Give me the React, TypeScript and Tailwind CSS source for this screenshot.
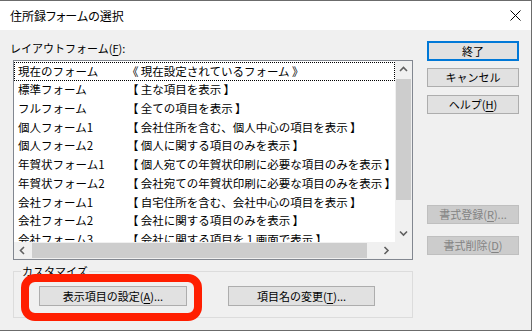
import React from 'react';

const rows: [string, string][] = [
  ['現在のフォーム', '《\u2009現在設定されているフォーム\u2009》'],
  ['標準フォーム', '【\u2009主な項目を表示\u2009】'],
  ['フルフォーム', '【\u2009全ての項目を表示\u2009】'],
  ['個人フォーム1', '【\u2009会社住所を含む、個人中心の項目を表示\u2009】'],
  ['個人フォーム2', '【\u2009個人に関する項目のみを表示\u2009】'],
  ['年賀状フォーム1', '【\u2009個人宛ての年賀状印刷に必要な項目のみを表示\u2009】'],
  ['年賀状フォーム2', '【\u2009会社宛ての年賀状印刷に必要な項目のみを表示\u2009】'],
  ['会社フォーム1', '【\u2009自宅住所を含む、会社中心の項目を表示\u2009】'],
  ['会社フォーム2', '【\u2009会社に関する項目のみを表示\u2009】'],
  ['会社フォーム3', '【\u2009会社に関する項目を１画面で表示\u2009】'],
];

function Chevron({ dir }: { dir: 'up' | 'down' | 'left' | 'right' }) {
  const d = {
    up: 'M1 5 L4.5 1.5 L8 5',
    down: 'M1 1.5 L4.5 5 L8 1.5',
    left: 'M5 1 L1.5 4.5 L5 8',
    right: 'M1.5 1 L5 4.5 L1.5 8',
  }[dir];
  const vertical = dir === 'up' || dir === 'down';
  return (
    <svg width={vertical ? 9 : 7} height={vertical ? 7 : 9} viewBox={vertical ? '0 0 9 7' : '0 0 7 9'}>
      <path d={d} fill="none" stroke="#606060" strokeWidth="1.6" />
    </svg>
  );
}

function Btn({ children, variant = 'normal', className = '' }: { children: React.ReactNode; variant?: 'normal' | 'default' | 'disabled'; className?: string }) {
  const styles = {
    normal: 'border border-[#adadad] bg-[#e1e1e1] text-black',
    default: 'border-2 border-[#0078d7] bg-[#e1e1e1] text-black',
    disabled: 'border border-[#bfbfbf] bg-[#cccccc] text-[#838383]',
  }[variant];
  return (
    <div className={`flex items-center justify-center leading-none ${styles} ${className}`}>
      <span>{children}</span>
    </div>
  );
}

export default function App() {
  return (
    <div className="relative w-[532px] h-[331px] flex flex-col overflow-hidden border-t border-r border-b border-[#6b6b6b] bg-[#f0f0f0] font-['Noto_Sans_CJK_JP','Noto_Sans',sans-serif] text-[11px] text-black">
      {/* title bar */}
      <div className="h-[29px] shrink-0 bg-white flex items-center justify-between pl-[10px] pr-[10px]">
        <span className="text-[12px] [font-feature-settings:'palt']">住所録フォームの選択</span>
        <svg width="11" height="11" viewBox="0 0 11 11">
          <path d="M0.5 0.5 L10.5 10.5 M10.5 0.5 L0.5 10.5" stroke="#000" strokeWidth="1" />
        </svg>
      </div>

      <div className="flex flex-1">
        {/* left column */}
        <div className="w-[413px] pl-[10px] pt-[10px]">
          <div className="h-[16px] leading-[16px]">
            レイアウトフォーム(<span className="underline underline-offset-2">F</span>):
          </div>

          <div className="ml-[3px] mt-[4px] w-[400px] h-[200px] border border-[#828790] bg-white grid grid-cols-[381px_17px] grid-rows-[181px_17px]">
            <div className="overflow-hidden pt-[1px] text-[11.5px]">
              {rows.map(([name, desc], i) => (
                <div
                  key={name}
                  className={`flex h-[18.7px] items-center whitespace-nowrap pl-[3px] ${i === 0 ? 'outline-1 outline-dotted outline-black -outline-offset-1' : ''}`}
                >
                  <span className="w-[110px] shrink-0 pl-[1px]">{name}</span>
                  <span>{desc}</span>
                </div>
              ))}
            </div>

            {/* vertical scrollbar */}
            <div className="bg-[#f0f0f0] flex flex-col">
              <div className="h-[17px] flex items-center justify-center"><Chevron dir="up" /></div>
              <div className="mx-[1px] mt-[1px] h-[121px] bg-[#cdcdcd]" />
              <div className="flex-1" />
              <div className="h-[17px] flex items-center justify-center"><Chevron dir="down" /></div>
            </div>

            {/* horizontal scrollbar */}
            <div className="bg-[#f0f0f0] flex">
              <div className="w-[17px] flex items-center justify-center"><Chevron dir="left" /></div>
              <div className="my-[1px] ml-[1px] w-[335px] bg-[#cdcdcd]" />
              <div className="flex-1" />
              <div className="w-[17px] flex items-center justify-center"><Chevron dir="right" /></div>
            </div>
            <div className="bg-[#f0f0f0]" />
          </div>

          <fieldset className="ml-[3px] mt-[3px] w-[400px] h-[55px] border border-[#dcdcdc]">
            <legend className="ml-[7px] px-[1px] leading-[16px]">カスタマイズ</legend>
            <div className="flex pl-[25px] pt-[7px] gap-[41px]">
              <Btn className="w-[148px] h-[20px]">
                表示項目の設定(<span className="underline underline-offset-2">A</span>)...
              </Btn>
              <Btn className="w-[147px] h-[20px]">
                項目名の変更(<span className="underline underline-offset-2">T</span>)...
              </Btn>
            </div>
          </fieldset>
        </div>

        {/* right column */}
        <div className="ml-[14px] pt-[11px] flex flex-col">
          <Btn variant="default" className="w-[92px] h-[20px]">終了</Btn>
          <Btn className="w-[92px] h-[19px] mt-[7px]">キャンセル</Btn>
          <Btn className="w-[92px] h-[19px] mt-[8px]">
            ヘルプ(<span className="underline underline-offset-2">H</span>)
          </Btn>
          <Btn variant="disabled" className="w-[92px] h-[19px] mt-[91px]">
            書式登録(<span className="underline underline-offset-2">R</span>)...
          </Btn>
          <Btn variant="disabled" className="w-[92px] h-[19px] mt-[12px]">
            書式削除(<span className="underline underline-offset-2">D</span>)
          </Btn>
        </div>
      </div>

      {/* red annotation around the first button */}
      <div className="absolute left-[21px] top-[273px] w-[181px] h-[47px] border-[8px] border-[#ff1e00] rounded-[14px]" />
    </div>
  );
}
